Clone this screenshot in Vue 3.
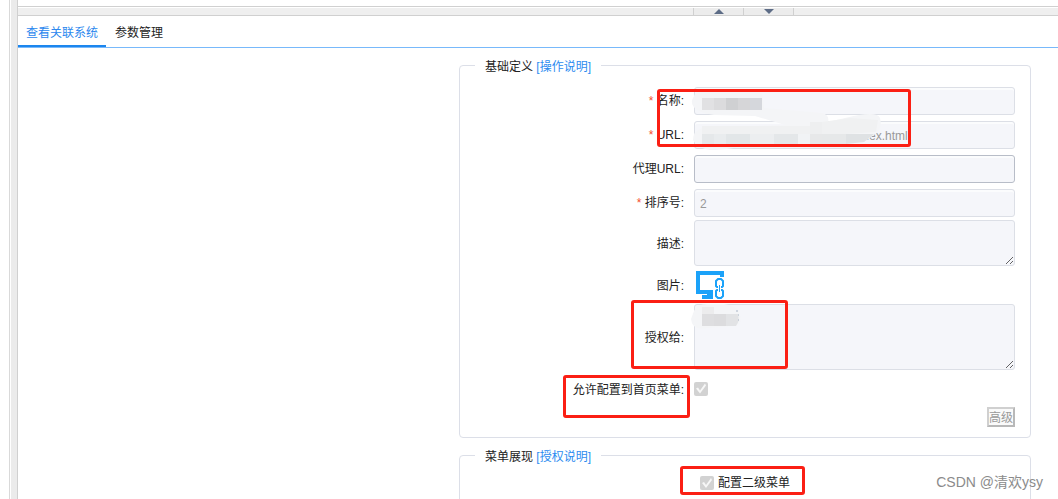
<script setup>
import { ref } from 'vue'

const tabs = ['查看关联系统', '参数管理']
const active = ref(0)
const textFields = [
  { id: 'name', label: '名称:', value: '', required: true, disabled: true },
  { id: 'url', label: 'URL:', value: 'index.html', required: true, disabled: true },
  { id: 'proxy', label: '代理URL:', value: '', required: false, disabled: false },
  { id: 'order', label: '排序号:', value: '2', required: true, disabled: true },
]
</script>

<template>
  <div class="page">
    <div class="rail"></div>
    <div class="content">
      <div class="splitter">
        <button class="split-button" type="button" aria-label="向上收起">
          <svg width="10" height="5" viewBox="0 0 10 5"><path d="M5 0L10 5H0Z" /></svg>
        </button>
        <button class="split-button" type="button" aria-label="向下展开">
          <svg width="10" height="5" viewBox="0 0 10 5"><path d="M0 0H10L5 5Z" /></svg>
        </button>
      </div>
      <nav class="tabs">
        <button
          v-for="(tab, i) in tabs"
          :key="tab"
          type="button"
          class="tab"
          :class="{ active: active === i }"
          @click="active = i"
        >{{ tab }}</button>
      </nav>

      <form class="form" @submit.prevent>
        <fieldset class="group">
          <legend>基础定义 <a href="#help">[操作说明]</a></legend>
          <div v-for="field in textFields" :key="field.id" class="row line">
            <label :for="field.id"><span v-if="field.required" class="star">*</span> {{ field.label }}</label>
            <input
              :id="field.id"
              type="text"
              class="text"
              :class="field.id"
              :value="field.value"
              :disabled="field.disabled"
            />
          </div>
          <div class="row tall">
            <label for="desc">描述:</label>
            <textarea id="desc" class="text desc" disabled></textarea>
          </div>
          <div class="row tall picture">
            <span class="caption">图片:</span>
            <svg class="icon" width="28" height="28" viewBox="0 0 28 28" role="img" aria-label="图片">
              <path fill="#1ba2f9" d="M0 0H28V6H24V4H4V19H17V28H6V24H11V23H0Z" />
              <g fill="none" stroke="#1ba2f9" stroke-width="2">
                <path d="M22 16H21L20 15V10L22 8H25L27 10V15L26 16H25" />
                <path d="M22 19H21L20 20V25L22 27H25L27 25V20L26 19H25" />
              </g>
              <path d="M23.5 14V21" stroke="#1ba2f9" stroke-width="1" />
            </svg>
          </div>
          <div class="row tall">
            <label for="grant">授权给:</label>
            <textarea id="grant" class="text grant" disabled></textarea>
          </div>
          <div class="row tall allow">
            <label for="allow">允许配置到首页菜单:</label>
            <input id="allow" type="checkbox" class="check" checked disabled />
          </div>
          <div class="actions"><button type="button" class="advanced" disabled>高级</button></div>
        </fieldset>

        <fieldset class="group menu">
          <legend>菜单展现 <a href="#grant-help">[授权说明]</a></legend>
          <div class="second">
            <input id="second" type="checkbox" class="check" checked disabled />
            <label for="second">配置二级菜单</label>
          </div>
        </fieldset>
      </form>
    </div>

    <svg class="redaction" width="230" height="70" viewBox="0 0 230 70" aria-hidden="true">
      <path fill="#f4f5f7" d="M5 6Q15 2 35 1L66 2Q73 4 73 12L74 20L132 25Q140 27 138 34L155 30Q187 22 190 30Q193 42 184 47L174 54Q150 56 122 55L75 54Q40 62 20 62Q7 60 3 52Q3 43 12 40L95 37L65 28L24 27Q0 23 2 12Z" />
      <g>
        <path fill="#e1e1e3" d="M12 10H24V22H12Z" />
        <path fill="#dbdbdd" d="M24 10H36V22H24Z" />
        <path fill="#cfd0d2" d="M36 10H48V22H36Z" />
        <path fill="#d6d6d8" d="M48 10H60V22H48Z" />
        <path fill="#d5d7dc" d="M60 10H72V22H60Z" />
      </g>
      <g>
        <path fill="#f0f1f2" d="M12 38H132V46H12Z" />
        <path fill="#e5e8ea" d="M12 46H24V56H12Z" />
        <path fill="#e9ecee" d="M24 46H36V56H24Z" />
        <path fill="#e2e6e8" d="M36 46H60V56H36Z" />
        <path fill="#eceef0" d="M60 46H84V56H60Z" />
        <path fill="#e4e7e9" d="M84 46H108V56H84Z" />
        <path fill="#f1f3f5" d="M108 46H120V56H108Z" />
        <path fill="#eeeff0" d="M120 34H132V46H120Z" />
        <path fill="#e7e8e9" d="M120 46H132V56H120Z" />
        <path fill="#e6e8e9" d="M132 46H156V56H132Z" />
        <path fill="#dfe2e4" d="M156 46H184L174 54L156 56Z" />
        <path fill="#f0f1f2" d="M132 34L160 30L188 32L186 44L156 46H132Z" />
      </g>
    </svg>
    <svg class="redaction lower" width="60" height="36" viewBox="0 0 60 36" aria-hidden="true">
      <path fill="#f4f5f7" d="M4 8Q7 1 17 1H34Q48 3 49 10Q53 20 46 23L17 25Q2 28 1 16Z" />
      <path fill="#ececed" d="M12 4H24V11H12Z" />
      <path fill="#dedee0" d="M12 11H24V23H12Z" />
      <path fill="#dcdcde" d="M24 11H36V23H24Z" />
      <path fill="#e2e3e5" d="M36 11H48Q50 18 46 23H36Z" />
      <path d="M46 8H48M48 12H49M48 17H49" stroke="#a9b5c6" />
    </svg>
    <div class="mark fields"></div>
    <div class="mark authorization"></div>
    <div class="mark homepage"></div>
    <div class="mark submenu"></div>
    <div class="watermark">CSDN @清欢ysy</div>
  </div>
</template>

<style>
body {
  margin: 0;
  background: #fff;
}
</style>

<style scoped>
.page,
.page * {
  box-sizing: border-box;
}
.page {
  position: relative;
  display: flex;
  height: 100vh;
  overflow: hidden;
  font: 12px/18px "Liberation Sans", "Noto Sans CJK SC", sans-serif;
  color: #222;
}
button,
input,
textarea {
  font: inherit;
}
.rail {
  flex: none;
  width: 9px;
  margin-left: 9px;
  border-left: 1px solid #d9d9d9;
  border-right: 1px solid #d0d0d0;
  background: #ebebeb;
  box-shadow: inset 1px 0 #fff;
}
.content {
  flex: 1;
  min-width: 0;
}
.splitter {
  display: flex;
  height: 10px;
  margin-top: 6px;
  padding-left: 675px;
  border-top: 1px solid #d0d0d0;
  border-bottom: 1px solid #d0d0d0;
  background: #efefef;
  box-shadow: inset 0 1px #fff;
}
.split-button {
  display: flex;
  align-items: center;
  justify-content: center;
  width: 50px;
  margin-top: 1px;
  padding: 0;
  border: 0;
  border-left: 1px solid #d0d0d0;
  background: #ececec;
}
.split-button:last-child {
  width: 51px;
  border-right: 1px solid #d0d0d0;
}
.split-button svg {
  fill: #5d6c86;
}
.tabs {
  display: flex;
  height: 32px;
  border-bottom: 1px solid #78b9fb;
}
.tab {
  padding: 4px 8px 0;
  border: 0;
  border-bottom: 2px solid transparent;
  background: none;
  color: #222;
}
.tab + .tab {
  margin-left: 1px;
}
.tab.active {
  border-color: #1c86ee;
  color: #2b87ee;
}
.form {
  padding: 7px 27px 0 441px;
}
.group {
  min-width: 0;
  margin: 0 0 7px;
  padding: 8px 15px 10px;
  border: 1px solid #dcdfe8;
  border-radius: 4px;
}
legend {
  padding: 4px 10px 0;
  line-height: 17px;
}
a {
  color: #2d8cf0;
  text-decoration: none;
}
.row {
  display: grid;
  grid-template-columns: 209px 1fr;
  column-gap: 10px;
  align-items: center;
}
.row label,
.caption {
  text-align: right;
}
.tall label,
.caption {
  padding-top: 2px;
}
.line {
  height: 34px;
}
.star {
  color: #f5502f;
}
.text {
  display: block;
  width: 100%;
  height: 28px;
  margin: 0;
  padding: 2px 5px 0;
  border: 1px solid #dcdfe6;
  border-radius: 3px;
  background: #f5f6fa;
  box-shadow: inset 0 2px #fbfcfd;
  color: #999;
}
.proxy {
  border-color: #b8bdc8;
}
.url {
  padding-left: 158px;
}
textarea.text {
  resize: both;
  box-shadow: none;
}
textarea.desc {
  height: 46px;
}
textarea.grant {
  height: 66px;
}
.picture {
  height: 38px;
}
.icon {
  margin-left: 2px;
}
.allow {
  height: 37px;
}
.check {
  appearance: none;
  width: 14px;
  height: 14px;
  margin: 0;
  border-radius: 2px;
  background: #d2d2d2;
}
.check::before {
  content: "";
  display: block;
  width: 14px;
  height: 14px;
  background: #f7f7f7;
  clip-path: polygon(2px 7px, 4px 6px, 6px 9px, 11px 2px, 12px 4px, 6px 12px);
}
.actions {
  display: flex;
  justify-content: flex-end;
}
.advanced {
  height: 20px;
  padding: 1px 0 0;
  border: 2px solid;
  border-color: #d0d0d0 #b8b8b8 #b8b8b8 #d0d0d0;
  background: #fafafa;
  color: #999;
  line-height: 16px;
}
.menu {
  min-height: 120px;
}
.second {
  display: flex;
  align-items: center;
  gap: 4px;
  padding-left: 225px;
}
.mark {
  position: absolute;
  border: 3px solid #fb1f14;
  border-radius: 3px;
}
.fields {
  left: 657px;
  top: 89px;
  width: 254px;
  height: 58px;
}
.authorization {
  left: 631px;
  top: 300px;
  width: 157px;
  height: 69px;
}
.homepage {
  left: 563px;
  top: 375px;
  width: 127px;
  height: 43px;
}
.submenu {
  left: 680px;
  top: 466px;
  width: 125px;
  height: 29px;
}
.redaction {
  position: absolute;
  left: 690px;
  top: 88px;
}
.redaction.lower {
  top: 303px;
}
.watermark {
  position: absolute;
  right: 15px;
  bottom: 7px;
  color: #8b8b8b;
  font-size: 14px;
  line-height: 20px;
}
</style>
